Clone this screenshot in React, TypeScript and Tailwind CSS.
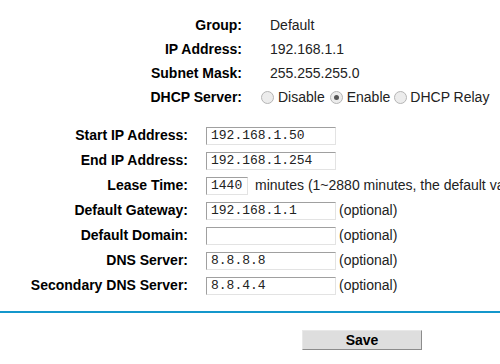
import React from 'react'

const topRows = [
  { label: 'Group:', value: 'Default' },
  { label: 'IP Address:', value: '192.168.1.1' },
  { label: 'Subnet Mask:', value: '255.255.255.0' },
]

function Radio({ checked }: { checked?: boolean }) {
  return (
    <span className="inline-flex h-[13px] w-[13px] items-center justify-center rounded-full border border-[#b5b5b5] bg-[#ececec]">
      {checked && <span className="h-[5px] w-[5px] rounded-full bg-[#555]" />}
    </span>
  )
}

function Field({ value, width = 'w-[130px]' }: { value: string; width?: string }) {
  return (
    <div
      className={`${width} h-[18px] border border-t-[#a0a0a0] border-l-[#a0a0a0] border-r-[#e3e3e3] border-b-[#e3e3e3] bg-white pl-[4px] text-[13px] leading-[16px] text-[#222] font-['Liberation_Mono',monospace]`}
    >
      {value}
    </div>
  )
}

const formRows = [
  { label: 'Start IP Address:', value: '192.168.1.50' },
  { label: 'End IP Address:', value: '192.168.1.254' },
  { label: 'Lease Time:', value: '1440', lease: true },
  { label: 'Default Gateway:', value: '192.168.1.1', opt: true },
  { label: 'Default Domain:', value: '', opt: true },
  { label: 'DNS Server:', value: '8.8.8.8', opt: true },
  { label: 'Secondary DNS Server:', value: '8.8.4.4', opt: true },
]

export default function App() {
  return (
    <div className="h-[364px] w-[500px] overflow-hidden bg-white text-[14px] text-black font-['Liberation_Sans',Arial,sans-serif]">
      <div className="pt-[13px]">
        {topRows.map((r) => (
          <div key={r.label} className="flex h-[24px] items-center">
            <div className="w-[242px] shrink-0 text-right font-bold">{r.label}</div>
            <div className="pl-[28px] text-[#222]">{r.value}</div>
          </div>
        ))}
        <div className="flex h-[25px] items-center">
          <div className="w-[242px] shrink-0 text-right font-bold">DHCP Server:</div>
          <div className="flex items-center whitespace-nowrap pl-[19px] text-[#222]">
            <Radio />
            <span className="ml-[4px]">Disable</span>
            <span className="ml-[5px] flex"><Radio checked /></span>
            <span className="ml-[4px]">Enable</span>
            <span className="ml-[4px] flex"><Radio /></span>
            <span className="ml-[3px]">DHCP Relay</span>
          </div>
        </div>
      </div>

      <div className="pt-[13px]">
        {formRows.map((r) => (
          <div key={r.label} className="flex h-[25px] items-center">
            <div className="w-[188px] shrink-0 text-right font-bold">{r.label}</div>
            <div className="flex items-center whitespace-nowrap pl-[18px] text-[#222]">
              {r.lease ? (
                <>
                  <Field value={r.value} width="w-[42px]" />
                  <span className="ml-[7px]">minutes (1~2880 minutes, the default value is 1440)</span>
                </>
              ) : (
                <>
                  <Field value={r.value} />
                  {r.opt && <span className="ml-[3px]">(optional)</span>}
                </>
              )}
            </div>
          </div>
        ))}
      </div>

      <div className="mt-[13px] h-[2px] bg-[#1497cb]" />

      <div className="pl-[302px] pt-[17px]">
        <button className="h-[20px] w-[120px] border border-t-[#e8e8e8] border-l-[#e8e8e8] border-r-[#8c8c8c] border-b-[#8c8c8c] bg-[#dedede] text-[14px] font-bold leading-none">
          Save
        </button>
      </div>
    </div>
  )
}
